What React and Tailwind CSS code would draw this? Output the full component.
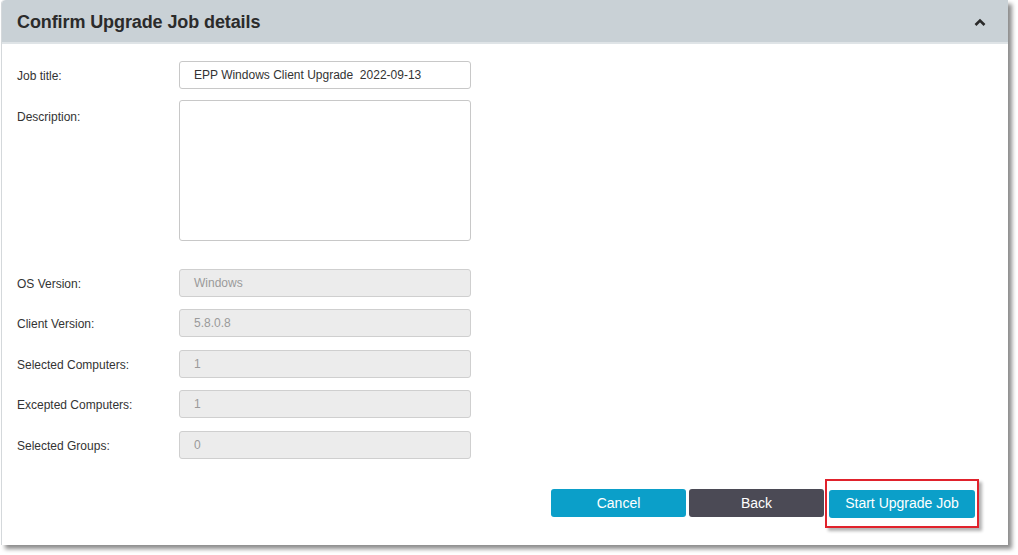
import React from "react";

const font = { fontFamily: '"Liberation Sans", Arial, sans-serif' };

function Field({ label, value, disabled, className = "" }) {
  return (
    <div className={`flex items-center ${className}`}>
      <div className="w-[162px] shrink-0 text-[12px] text-[#333] pt-[2px]">{label}</div>
      <div
        className={`w-[292px] h-[28px] rounded-[3px] border flex items-center pl-[14px] text-[12px] whitespace-pre ${
          disabled
            ? "bg-[#ececec] border-[#cfcfcf] text-[#9a9a9a]"
            : "bg-white border-[#c8c8c8] text-[#333]"
        }`}
      >
        {value}
      </div>
    </div>
  );
}

export default function App() {
  return (
    <div className="w-[1018px] h-[555px] bg-white" style={font}>
      <div className="ml-[1px] w-[1007px] h-[545px] bg-white border-l border-[#d4d8db] rounded-tl-[4px] shadow-[4px_4px_4px_rgba(0,0,0,0.45)] flex flex-col">
        <div className="h-[44px] bg-[#c9d1d6] border-b-2 border-[#dfe4e7] rounded-tl-[4px] flex items-center justify-between pl-[15px] pr-[22px] shrink-0">
          <div className="text-[18px] font-bold text-[#2b2b2b] tracking-[-0.1px] pt-[2px]">Confirm Upgrade Job details</div>
          <svg width="12" height="9" viewBox="0 0 12 9" className="mt-[2px]">
            <path d="M1.5 7 L6 2.5 L10.5 7" fill="none" stroke="#2a2a2a" strokeWidth="2.6" />
          </svg>
        </div>
        <div className="pl-[15px] pt-[17px] flex flex-col">
          <Field label="Job title:" value="EPP Windows Client Upgrade  2022-09-13" />
          <div className="flex mt-[11px]">
            <div className="w-[162px] shrink-0 text-[12px] text-[#333] pt-[8px]">Description:</div>
            <div className="w-[292px] h-[141px] rounded-[3px] border border-[#c8c8c8] bg-white" />
          </div>
          <Field className="mt-[28px]" label="OS Version:" value="Windows" disabled />
          <Field className="mt-[12px]" label="Client Version:" value="5.8.0.8" disabled />
          <Field className="mt-[13px]" label="Selected Computers:" value="1" disabled />
          <Field className="mt-[12px]" label="Excepted Computers:" value="1" disabled />
          <Field className="mt-[13px]" label="Selected Groups:" value="0" disabled />
        </div>
        <div className="flex items-start mt-[20px] pl-[549px]">
          <button className="mt-[10px] w-[135px] h-[28px] rounded-[3px] bg-[#0b9fc9] text-white text-[14px]">Cancel</button>
          <button className="mt-[10px] ml-[3px] w-[135px] h-[28px] rounded-[3px] bg-[#4b4a55] text-white text-[14px]">Back</button>
          <div className="ml-[1px] w-[154px] h-[49px] border-2 border-[#e0222c] shadow-[3px_3px_3px_rgba(0,0,0,0.3)] flex items-center justify-center">
            <button className="w-[146px] h-[28px] rounded-[3px] bg-[#0b9fc9] text-white text-[14px]">Start Upgrade Job</button>
          </div>
        </div>
      </div>
    </div>
  );
}
